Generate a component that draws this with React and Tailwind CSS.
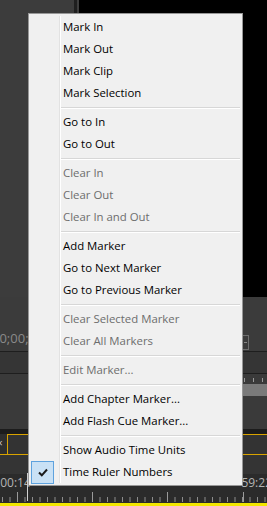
import React from "react";

const items = [
  { label: "Mark In" },
  { label: "Mark Out" },
  { label: "Mark Clip" },
  { label: "Mark Selection" },
  { sep: true },
  { label: "Go to In" },
  { label: "Go to Out" },
  { sep: true },
  { label: "Clear In", disabled: true },
  { label: "Clear Out", disabled: true },
  { label: "Clear In and Out", disabled: true },
  { sep: true },
  { label: "Add Marker" },
  { label: "Go to Next Marker" },
  { label: "Go to Previous Marker" },
  { sep: true },
  { label: "Clear Selected Marker", disabled: true },
  { label: "Clear All Markers", disabled: true },
  { sep: true },
  { label: "Edit Marker...", disabled: true },
  { sep: true },
  { label: "Add Chapter Marker..." },
  { label: "Add Flash Cue Marker..." },
  { sep: true },
  { label: "Show Audio Time Units" },
  { label: "Time Ruler Numbers", checked: true },
];

// ruler ticks along the bottom of the timeline
const Ticks = () => {
  const minor = [];
  for (let x = 2; x < 267; x += 7.5) minor.push(x);
  return (
    <svg width="267" height="12" className="block">
      {minor.map((x, i) => (
        <line key={i} x1={x + 0.5} x2={x + 0.5} y1="6" y2="11" stroke="#8c8c8c" strokeWidth="1" />
      ))}
      {[17, 92, 167, 243].map((x) => (
        <line key={"m" + x} x1={x + 0.5} x2={x + 0.5} y1="1" y2="11" stroke="#9a9a9a" strokeWidth="1" />
      ))}
    </svg>
  );
};

const Menu = () => (
  <div className="absolute left-[28px] top-[13px] w-[215px] border border-[#979797] bg-[#f0f0f0] pt-[2px] pb-[2px]">
    {/* gutter line */}
    <div className="absolute left-[30px] top-[2px] bottom-[2px] w-[2px] border-l border-[#e2e2e2] border-r border-r-white" />
    {items.map((it, i) =>
      it.sep ? (
        <div key={i} className="h-[7px] pl-[31px] pr-[2px] pt-[3px]">
          <div className="h-[1px] bg-[#d7d7d7]" />
          <div className="h-[1px] bg-white" />
        </div>
      ) : (
        <div key={i} className="relative h-[22px] flex items-center pl-[34px]">
          {it.checked && (
            <div className="absolute left-[2px] top-[0px] w-[23px] h-[23px] border border-[#5ea2de] bg-[#c9e1f5] flex items-center justify-center">
              <svg width="10" height="9" viewBox="0 0 10 9">
                <path d="M1 4.5 L3.8 7.3 L9 1.5" fill="none" stroke="#1a1a1a" strokeWidth="2" />
              </svg>
            </div>
          )}
          <span className={it.disabled ? "text-[#6d6d6d]" : "text-[#000000]"}>{it.label}</span>
        </div>
      )
    )}
  </div>
);

export default function App() {
  return (
    <div
      className="relative w-[267px] h-[506px] overflow-hidden bg-[#3a3a3a] text-[11.4px] leading-none"
      style={{ fontFamily: '"Open Sans", "Noto Sans", sans-serif' }}
    >
      {/* top: project panel + program monitor */}
      <div className="flex h-[297px]">
        <div className="w-[74px] bg-[#3c3c3c]" />
        <div className="w-[3px] bg-[#1f1f1f]" />
        <div className="w-[2px] bg-[#3e3e3e]" />
        <div className="flex-1 bg-black" />
      </div>

      {/* monitor controls */}
      <div className="h-[54px] bg-[#3b3b3b] flex items-start justify-between overflow-hidden">
        <span className="ml-[-8px] mt-[35px] text-[13px] text-[#8a8a8a]">00;00;00;00</span>
        <div className="mr-[18px] mt-[38px] w-[16px] h-[15px] border border-[#6e6e6e] flex items-center justify-end pr-[1px]">
          <div className="w-[3px] h-[1px] bg-[#888]" />
        </div>
      </div>
      <div className="h-[1px] bg-[#1e1e1e]" />
      <div className="h-[21px] bg-[#353535]" />
      <div className="h-[1px] bg-[#1e1e1e]" />

      {/* monitor zoom bar */}
      <div className="h-[55px] bg-[#3a3a3a] flex flex-col">
        <div className="h-[4px] mt-[4px] flex justify-end gap-[8px] pr-[4px]">
          <div className="w-[1px] h-[4px] bg-[#9a9a9a]" />
          <div className="w-[1px] h-[4px] bg-[#9a9a9a]" />
          <div className="w-[1px] h-[4px] bg-[#9a9a9a]" />
        </div>
        <div className="ml-[120px] h-[12px] mt-[2px] bg-[#7a7a7a]" />
      </div>

      {/* timeline tab strip */}
      <div className="h-[5px] bg-[#1c1c1c]" />
      <div className="h-[21px] bg-[#2e2e2e] flex items-end border-b border-[#d9a300]">
        <span className="text-[10px] text-[#c8c8c8] ml-[-3px] mb-[6px]">×</span>
        <div className="ml-[4px] h-[20px] flex-1 border-t border-l border-[#d9a300] bg-[#333333]" />
      </div>
      <div className="h-[19px] bg-[#343434]" />

      {/* time ruler */}
      <div className="relative h-[17px] bg-[#2b2b2b] flex items-center justify-between text-[12px] text-[#b4b4b4]">
        <span className="ml-[-3px]">:00:14</span>
        <span className="mr-[-5px]">59:22</span>
      </div>
      <div className="h-[12px] bg-[#2b2b2b]">
        <Ticks />
      </div>
      <div className="absolute left-[27px] top-[473px] w-[1px] h-[28px] bg-[#d0d0d0]" />
      <div className="absolute left-0 right-0 bottom-0 h-[3px] bg-[#f2e600]" />

      <Menu />
    </div>
  );
}
